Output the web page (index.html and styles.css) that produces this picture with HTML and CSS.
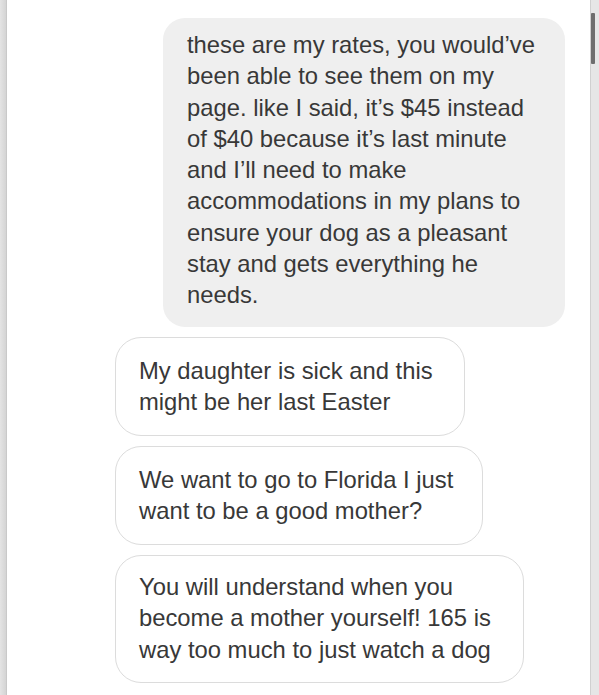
FILE: index.html
```html
<!DOCTYPE html>
<html>
<head>
<meta charset="utf-8">
<link rel="stylesheet" href="styles.css">
</head>
<body>
<div class="frame">
  <div class="edge-left"></div>
  <main class="thread">
    <div class="msg msg-out">these are my rates, you would’ve<br>been able to see them on my<br>page. like I said, it’s $45 instead<br>of $40 because it’s last minute<br>and I’ll need to make<br>accommodations in my plans to<br>ensure your dog as a pleasant<br>stay and gets everything he<br>needs.</div>
    <div class="msg msg-in in-1">My daughter is sick and this<br>might be her last Easter</div>
    <div class="msg msg-in in-2">We want to go to Florida I just<br>want to be a good mother?</div>
    <div class="msg msg-in in-3">You will understand when you<br>become a mother yourself! 165 is<br>way too much to just watch a dog</div>
  </main>
  <div class="edge-right"><div class="scrollbar"></div></div>
</div>
</body>
</html>
```
FILE: styles.css
```css
html, body {
  margin: 0;
  padding: 0;
  background: #ffffff;
}
.frame {
  display: flex;
  width: 599px;
  height: 695px;
  overflow: hidden;
}
.edge-left {
  width: 7px;
  flex: none;
  background: linear-gradient(to right, #e4e4e4, #d4d4d4);
  border-right: 1px solid #c9c9c9;
  box-sizing: border-box;
}
.edge-right {
  width: 9px;
  flex: none;
  background: #e6e6e6;
  border-left: 1px solid #d0d0d0;
  box-sizing: border-box;
  padding-top: 13px;
}
.scrollbar {
  width: 4px;
  height: 51px;
  background: #6e6e6e;
  border-radius: 1px;
}
.thread {
  flex: 1;
  display: flex;
  flex-direction: column;
  align-items: flex-start;
  gap: 10px;
  padding: 18px 25px 0 108px;
  font-family: "Liberation Sans", Arial, sans-serif;
  font-size: 23.8px;
  line-height: 31.3px;
  color: #383838;
}
.msg {
  box-sizing: border-box;
  white-space: nowrap;
}
.msg-out {
  align-self: flex-end;
  width: 402px;
  height: 309px;
  background: #efefef;
  border-radius: 22px;
  padding: 11px 24px;
}
.msg-in {
  border: 1px solid #dcdcdc;
  border-radius: 26px;
  padding: 17px 23px;
}
.in-1 { width: 350px; height: 99px; }
.in-2 { width: 368px; height: 99px; }
.in-3 { width: 409px; height: 128px; padding-top: 15px; }
```
